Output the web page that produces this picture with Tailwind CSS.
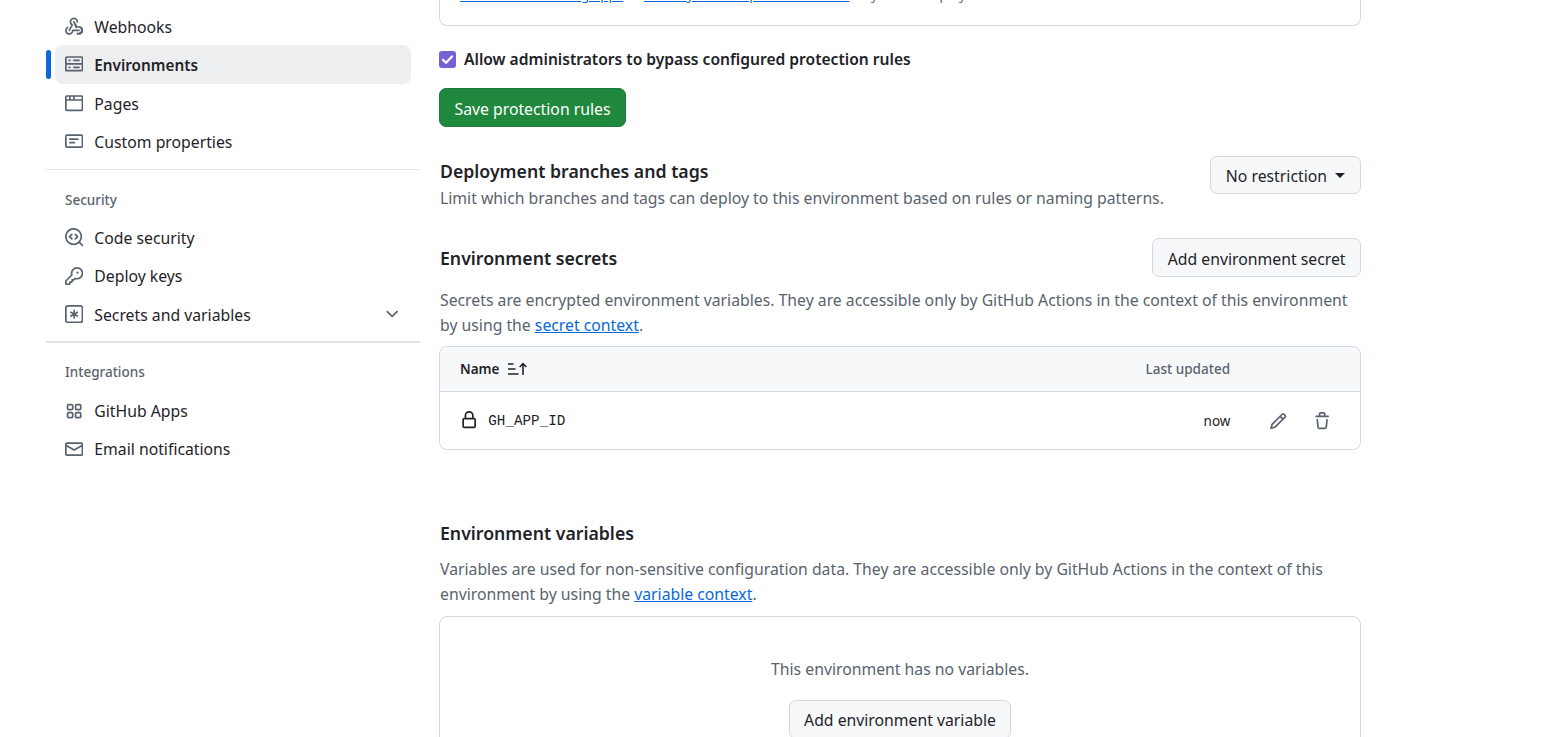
<!DOCTYPE html>
<html lang="en">
<head>
  <meta charset="UTF-8" />
  <meta name="viewport" content="width=device-width, initial-scale=1" />
  <title>Environment settings</title>
  <script src="https://cdn.jsdelivr.net/npm/@tailwindcss/browser@4"></script>
</head>
<body class="bg-white text-[#1f2328] font-['Noto_Sans',sans-serif] text-[15.78px] h-[737px] overflow-hidden">
  <div class="flex items-start">
    <!-- Sidebar -->
    <nav class="w-[374px] ml-[46px] shrink-0 pt-[6.8px]">
      <a class="flex items-center h-[38.4px] ml-[9px] mr-[9px] pl-[10px] gap-[11px] text-[#1f2328]">
        <svg class="w-[18.3px] h-[18.3px] fill-[#59636e] shrink-0" viewBox="0 0 16 16"><path d="M5.5 4.25a2.25 2.25 0 0 1 4.5 0 .75.75 0 0 0 1.5 0 3.75 3.75 0 1 0-6.14 2.889l-2.272 4.258a.75.75 0 0 0 1.324.706L7 7.25a.75.75 0 0 0-.309-1.015A2.25 2.25 0 0 1 5.5 4.25Z"/><path d="M7.364 3.607a.75.75 0 0 1 1.03.257l2.608 4.349a3.75 3.75 0 1 1-.628 6.785.75.75 0 0 1 .724-1.313 2.25 2.25 0 1 0-.752-3.96.75.75 0 0 1-1.1-.2L7.107 4.636a.75.75 0 0 1 .257-1.029Z"/><path d="M2.9 8.776A.75.75 0 0 1 2.625 9.8 2.25 2.25 0 1 0 6 11.75a.75.75 0 0 1 .75-.751h5.5a.75.75 0 0 1 0 1.5H7.425a3.751 3.751 0 1 1-5.55-3.998.75.75 0 0 1 1.024.274Z"/></svg>
        <span class="mt-[3px]">Webhooks</span>
      </a>
      <div class="relative">
        <span class="absolute left-0 top-[5px] w-[5px] h-[29px] rounded-full bg-[#0969da]"></span>
        <a class="flex items-center h-[38.4px] ml-[9px] mr-[9px] pl-[10px] gap-[11px] font-semibold text-[15.3px] bg-[#eceef0] rounded-[8px]">
          <svg class="w-[18.3px] h-[18.3px] fill-[#59636e] shrink-0" viewBox="0 0 16 16"><path d="M1.75 1h12.5c.966 0 1.75.784 1.75 1.75v4c0 .372-.116.717-.314 1 .198.283.314.628.314 1v4a1.75 1.75 0 0 1-1.75 1.75H1.75A1.75 1.75 0 0 1 0 13.75v-4c0-.372.116-.717.314-1A1.742 1.742 0 0 1 0 6.75v-4C0 1.784.784 1 1.75 1ZM1.5 2.75v4c0 .138.112.25.25.25h12.5a.25.25 0 0 0 .25-.25v-4a.25.25 0 0 0-.25-.25H1.75a.25.25 0 0 0-.25.25Zm.25 5.75a.25.25 0 0 0-.25.25v4c0 .138.112.25.25.25h12.5a.25.25 0 0 0 .25-.25v-4a.25.25 0 0 0-.25-.25ZM7 4.75A.75.75 0 0 1 7.75 4h4.5a.75.75 0 0 1 0 1.5h-4.5A.75.75 0 0 1 7 4.75ZM7.75 10h4.5a.75.75 0 0 1 0 1.5h-4.5a.75.75 0 0 1 0-1.5ZM3 4.75A.75.75 0 0 1 3.75 4h.5a.75.75 0 0 1 0 1.5h-.5A.75.75 0 0 1 3 4.75ZM3.75 10h.5a.75.75 0 0 1 0 1.5h-.5a.75.75 0 0 1 0-1.5Z"/></svg>
          <span class="mt-[2px]">Environments</span>
        </a>
      </div>
      <a class="flex items-center h-[38.4px] ml-[9px] mr-[9px] pl-[10px] gap-[11px]">
        <svg class="w-[18.3px] h-[18.3px] fill-[#59636e] shrink-0" viewBox="0 0 16 16"><path d="M0 2.75C0 1.784.784 1 1.75 1h12.5c.966 0 1.75.784 1.75 1.75v10.5A1.75 1.75 0 0 1 14.25 15H1.75A1.75 1.75 0 0 1 0 13.25ZM14.5 6h-13v7.25c0 .138.112.25.25.25h12.5a.25.25 0 0 0 .25-.25Zm-6-3.5v2h6V2.75a.25.25 0 0 0-.25-.25ZM5 2.5v2h2v-2Zm-3.25 0a.25.25 0 0 0-.25.25V4.5h2v-2Z"/></svg>
        <span class="mt-[4px]">Pages</span>
      </a>
      <a class="flex items-center h-[38.4px] ml-[9px] mr-[9px] pl-[10px] gap-[11px]">
        <svg class="w-[18.3px] h-[18.3px] fill-[#59636e] shrink-0" viewBox="0 0 16 16"><path d="M0 3.75C0 2.784.784 2 1.75 2h12.5c.966 0 1.75.784 1.75 1.75v8.5A1.75 1.75 0 0 1 14.25 14H1.75A1.75 1.75 0 0 1 0 12.25Zm1.75-.25a.25.25 0 0 0-.25.25v8.5c0 .138.112.25.25.25h12.5a.25.25 0 0 0 .25-.25v-8.5a.25.25 0 0 0-.25-.25ZM3.5 6.25a.75.75 0 0 1 .75-.75h7a.75.75 0 0 1 0 1.5h-7a.75.75 0 0 1-.75-.75Zm.75 2.25h4a.75.75 0 0 1 0 1.5h-4a.75.75 0 0 1 0-1.5Z"/></svg>
        <span class="mt-[3px]">Custom properties</span>
      </a>

      <div class="h-px bg-[#e3e6e9] mt-[9px]"></div>
      <h2 class="pl-[19px] mt-[20.5px] h-[19px] leading-[19px] text-[13.5px] font-medium text-[#59636e]">Security</h2>
      <div class="mt-[8.5px]">
        <a class="flex items-center h-[38.4px] ml-[9px] mr-[9px] pl-[10px] gap-[11px]">
          <svg class="w-[18.3px] h-[18.3px] fill-[#59636e] shrink-0" viewBox="0 0 16 16"><path d="M8.47 4.97a.75.75 0 0 0 0 1.06L9.94 7.5 8.47 8.97a.75.75 0 1 0 1.06 1.06l2-2a.75.75 0 0 0 0-1.06l-2-2a.75.75 0 0 0-1.06 0ZM6.53 6.03a.75.75 0 0 0-1.06-1.06l-2 2a.75.75 0 0 0 0 1.06l2 2a.75.75 0 1 0 1.06-1.06L5.06 7.5l1.47-1.47Z"/><path d="M12.246 13.307a7.501 7.501 0 1 1 1.06-1.06l2.474 2.473a.749.749 0 0 1-.326 1.275.749.749 0 0 1-.734-.215ZM1.5 7.5a6.002 6.002 0 0 0 3.608 5.504 6.002 6.002 0 0 0 6.486-1.117.748.748 0 0 1 .292-.293A6 6 0 1 0 1.5 7.5Z"/></svg>
          <span class="mt-[2px]">Code security</span>
        </a>
        <a class="flex items-center h-[38.4px] ml-[9px] mr-[9px] pl-[10px] gap-[11px]">
          <svg class="w-[18.3px] h-[18.3px] fill-[#59636e] shrink-0" viewBox="0 0 16 16"><path d="M10.5 0a5.499 5.499 0 1 1-1.288 10.848l-.932.932a.749.749 0 0 1-.53.22H7v.75a.749.749 0 0 1-.22.53l-.5.5a.749.749 0 0 1-.53.22H5v.75a.749.749 0 0 1-.22.53l-.5.5a.749.749 0 0 1-.53.22h-2A1.75 1.75 0 0 1 0 14.25v-2c0-.199.079-.389.22-.53l4.932-4.932A5.5 5.5 0 0 1 10.5 0Zm-4 5.5c-.001.431.069.86.205 1.269a.75.75 0 0 1-.181.768L1.5 12.56v1.69c0 .138.112.25.25.25h1.69l.06-.06v-1.19a.75.75 0 0 1 .75-.75h1.19l.06-.06v-1.19a.75.75 0 0 1 .75-.75h1.19l1.023-1.025a.75.75 0 0 1 .768-.18A4 4 0 1 0 6.5 5.5ZM11 6a1 1 0 1 1 0-2 1 1 0 0 1 0 2Z"/></svg>
          <span class="mt-[2px]">Deploy keys</span>
        </a>
        <a class="flex items-center h-[38.4px] ml-[9px] mr-[9px] pl-[10px] gap-[11px]">
          <svg class="w-[18.3px] h-[18.3px] fill-[#59636e] shrink-0" viewBox="0 0 16 16"><path d="M0 2.75A2.75 2.75 0 0 1 2.75 0h10.5A2.75 2.75 0 0 1 16 2.75v10.5A2.75 2.75 0 0 1 13.25 16H2.75A2.75 2.75 0 0 1 0 13.25ZM2.75 1.5c-.69 0-1.25.56-1.25 1.25v10.5c0 .69.56 1.25 1.25 1.25h10.5c.69 0 1.25-.56 1.25-1.25V2.75c0-.69-.56-1.25-1.25-1.25Z"/><path d="M8 4a.75.75 0 0 1 .75.75V6.7l1.69-.975a.75.75 0 0 1 .75 1.3L9.5 8l1.69.976a.75.75 0 0 1-.75 1.298L8.75 9.3v1.951a.75.75 0 0 1-1.5 0V9.299l-1.69.976a.75.75 0 0 1-.75-1.3L6.5 8l-1.69-.975a.75.75 0 0 1 .75-1.3l1.69.976V4.75A.75.75 0 0 1 8 4Z"/></svg>
          <span class="mt-[2px]">Secrets and variables</span>
          <svg class="w-[18.3px] h-[18.3px] fill-[#59636e] shrink-0 ml-auto mr-[10px]" viewBox="0 0 16 16"><path d="M12.78 5.22a.749.749 0 0 1 0 1.06l-4.25 4.25a.749.749 0 0 1-1.06 0L3.22 6.28a.749.749 0 1 1 1.06-1.06L8 8.939l3.72-3.719a.749.749 0 0 1 1.06 0Z"/></svg>
        </a>
      </div>

      <div class="h-[2px] bg-[#dfe3e7] mt-[7px]"></div>
      <h2 class="pl-[19px] mt-[20px] h-[19px] leading-[19px] text-[13.5px] font-medium text-[#59636e]">Integrations</h2>
      <div class="mt-[10px]">
        <a class="flex items-center h-[38.4px] ml-[9px] mr-[9px] pl-[10px] gap-[11px]">
          <svg class="w-[18.3px] h-[18.3px] fill-[#59636e] shrink-0" viewBox="0 0 16 16"><path d="M1.5 3.25c0-.966.784-1.75 1.75-1.75h2.5c.966 0 1.75.784 1.75 1.75v2.5A1.75 1.75 0 0 1 5.75 7.5h-2.5A1.75 1.75 0 0 1 1.5 5.75Zm7 0c0-.966.784-1.75 1.75-1.75h2.5c.966 0 1.75.784 1.75 1.75v2.5a1.75 1.75 0 0 1-1.75 1.75h-2.5A1.75 1.75 0 0 1 8.5 5.75Zm-7 7c0-.966.784-1.75 1.75-1.75h2.5c.966 0 1.75.784 1.75 1.75v2.5a1.75 1.75 0 0 1-1.75 1.75h-2.5a1.75 1.75 0 0 1-1.75-1.75Zm7 0c0-.966.784-1.75 1.75-1.75h2.5c.966 0 1.75.784 1.75 1.75v2.5a1.75 1.75 0 0 1-1.75 1.75h-2.5a1.75 1.75 0 0 1-1.75-1.75ZM3.25 3a.25.25 0 0 0-.25.25v2.5c0 .138.112.25.25.25h2.5A.25.25 0 0 0 6 5.75v-2.5A.25.25 0 0 0 5.75 3Zm7 0a.25.25 0 0 0-.25.25v2.5c0 .138.112.25.25.25h2.5a.25.25 0 0 0 .25-.25v-2.5a.25.25 0 0 0-.25-.25Zm-7 7a.25.25 0 0 0-.25.25v2.5c0 .138.112.25.25.25h2.5a.25.25 0 0 0 .25-.25v-2.5a.25.25 0 0 0-.25-.25Zm7 0a.25.25 0 0 0-.25.25v2.5c0 .138.112.25.25.25h2.5a.25.25 0 0 0 .25-.25v-2.5a.25.25 0 0 0-.25-.25Z"/></svg>
          <span class="mt-[2px]">GitHub Apps</span>
        </a>
        <a class="flex items-center h-[38.4px] ml-[9px] mr-[9px] pl-[10px] gap-[11px]">
          <svg class="w-[18.3px] h-[18.3px] fill-[#59636e] shrink-0" viewBox="0 0 16 16"><path d="M1.75 2h12.5c.966 0 1.75.784 1.75 1.75v8.5A1.75 1.75 0 0 1 14.25 14H1.75A1.75 1.75 0 0 1 0 12.25v-8.5C0 2.784.784 2 1.75 2ZM1.5 12.251c0 .138.112.25.25.25h12.5a.25.25 0 0 0 .25-.25V5.809L8.38 9.397a.75.75 0 0 1-.76 0L1.5 5.809v6.442Zm13-8.181v-.32a.25.25 0 0 0-.25-.25H1.75a.25.25 0 0 0-.25.25v.32L8 7.88Z"/></svg>
          <span class="mt-[2px]">Email notifications</span>
        </a>
      </div>
    </nav>

    <!-- Main column, scrolled part way down the page -->
    <main class="w-[922px] ml-[19px] shrink-0">
      <div class="h-[26px] overflow-hidden border border-t-0 border-[#d1d9e0] rounded-b-[8px] pl-[20px] text-[#59636e] text-[13.45px] leading-[20px] relative">
        <p class="absolute top-[-15px] left-[20px] whitespace-nowrap"><a class="text-[#0969da] underline">Learn about existing apps</a> or <a class="text-[#0969da] underline">create your own protection rules</a> so you can deploy with confidence.</p>
      </div>

      <label class="flex items-center gap-[8px] mt-[23px] h-[20px] font-semibold text-[15.6px]">
        <span class="w-[17px] h-[17px] rounded-[3px] bg-[#7760d6] flex items-center justify-center shrink-0">
          <svg class="w-[13px] h-[13px] fill-none stroke-white stroke-[2.8px]" viewBox="0 0 16 16"><path d="M2.5 8.5 6.2 12 13.5 4.2" stroke-linecap="round" stroke-linejoin="round"/></svg>
        </span>
        <span class="mt-[2px]">Allow administrators to bypass configured protection rules</span>
      </label>
      <button class="block mt-[19px] h-[39px] w-[187px] pt-[4px] whitespace-nowrap bg-[#1f883d] text-white rounded-[7px] border border-[#1b7c37]">Save protection rules</button>

      <section class="flex justify-between items-start mt-[29px]">
        <div class="pl-[1px]">
          <h3 class="text-[17.7px] font-semibold leading-[27px] mt-[2px]">Deployment branches and tags</h3>
          <p class="text-[#59636e] leading-[25px] mt-[1px]">Limit which branches and tags can deploy to this environment based on rules or naming patterns.</p>
        </div>
        <button class="flex items-center gap-[8px] h-[38px] px-[15px] pt-[3px] bg-[#f6f8fa] border border-[#d1d9e0] rounded-[7px]">
          No restriction
          <span class="w-0 h-0 border-x-[5px] border-x-transparent border-t-[5px] border-t-[#1f2328] -mt-[3px]"></span>
        </button>
      </section>

      <section class="mt-[27px]">
        <div class="flex justify-between items-center">
          <h3 class="text-[17.7px] font-semibold pl-[1px] pt-[2px]">Environment secrets</h3>
          <button class="h-[39px] px-[14.5px] pt-[4px] bg-[#f6f8fa] border border-[#d1d9e0] rounded-[7px]">Add environment secret</button>
        </div>
        <p class="text-[#59636e] leading-[25px] mt-[11px] pl-[1px]">Secrets are encrypted environment variables. They are accessible only by GitHub Actions in the context of this environment<br />by using the <a class="text-[#0969da] underline">secret context</a>.</p>
        <div class="mt-[8px] border border-[#d1d9e0] rounded-[8px] overflow-hidden">
          <div class="flex items-center h-[45px] bg-[#f6f8fa] border-b border-[#d1d9e0] pl-[20px] pr-[130px] text-[13.5px]">
            <span class="font-semibold">Name</span>
            <svg class="w-[21px] h-[16px] ml-[9px] fill-[#1f2328]" viewBox="0 0 21 16"><path d="M0 2.2h5.5v1.6H0ZM0 7.2h7.5v1.6H0ZM0 12.2h10.5v1.6H0Z"/><path d="M15.8 14h-1.6V4.6l-2 2-1.1-1.1L15 1.6l3.9 3.9-1.1 1.1-2-2Z"/></svg>
            <span class="ml-auto font-medium text-[#59636e] text-[13.5px]">Last updated</span>
          </div>
          <div class="flex items-center h-[57px] pl-[20px] pr-[29px]">
            <svg class="w-[18.3px] h-[18.3px] fill-[#1f2328] shrink-0" viewBox="0 0 16 16"><path d="M4 4a4 4 0 0 1 8 0v2h.25c.966 0 1.75.784 1.75 1.75v5.5A1.75 1.75 0 0 1 12.25 15h-8.5A1.75 1.75 0 0 1 2 13.25v-5.5C2 6.784 2.784 6 3.75 6H4Zm8.25 3.5h-8.5a.25.25 0 0 0-.25.25v5.5c0 .138.112.25.25.25h8.5a.25.25 0 0 0 .25-.25v-5.5a.25.25 0 0 0-.25-.25ZM10.5 6V4a2.5 2.5 0 1 0-5 0v2Z"/></svg>
            <span class="ml-[10px] font-['Liberation_Mono',monospace] text-[14.27px] mt-[2px]">GH_APP_ID</span>
            <span class="ml-auto text-[13.5px] mt-[2px]">now</span>
            <svg class="w-[18.3px] h-[18.3px] ml-[39px] mt-[1px] fill-[#59636e]" viewBox="0 0 16 16"><path d="M11.013 1.427a1.75 1.75 0 0 1 2.474 0l1.086 1.086a1.75 1.75 0 0 1 0 2.474l-8.61 8.61c-.21.21-.47.364-.756.445l-3.251.93a.75.75 0 0 1-.927-.928l.929-3.25c.081-.286.235-.547.445-.758l8.61-8.61Zm.176 4.823L9.75 4.81l-6.286 6.287a.253.253 0 0 0-.064.108l-.558 1.953 1.953-.558a.253.253 0 0 0 .108-.064Zm1.238-3.763a.25.25 0 0 0-.354 0L10.811 3.75l1.439 1.44 1.263-1.263a.25.25 0 0 0 0-.354Z"/></svg>
            <svg class="w-[18.3px] h-[18.3px] ml-[25px] mt-[1px] fill-[#59636e]" viewBox="0 0 16 16"><path d="M11 1.75V3h2.25a.75.75 0 0 1 0 1.5H2.75a.75.75 0 0 1 0-1.5H5V1.75C5 .784 5.784 0 6.75 0h2.5C10.216 0 11 .784 11 1.75ZM4.496 6.675l.66 6.6a.25.25 0 0 0 .249.225h5.19a.25.25 0 0 0 .249-.225l.66-6.6a.75.75 0 0 1 1.492.149l-.66 6.6A1.748 1.748 0 0 1 10.595 15h-5.19a1.75 1.75 0 0 1-1.741-1.575l-.66-6.6a.75.75 0 1 1 1.492-.15ZM6.5 1.75V3h3V1.75a.25.25 0 0 0-.25-.25h-2.5a.25.25 0 0 0-.25.25Z"/></svg>
          </div>
        </div>
      </section>

      <section class="mt-[69px]">
        <h3 class="text-[17.7px] font-semibold leading-[27px] pl-[1px] pt-[1px] -mb-[1px]">Environment variables</h3>
        <p class="text-[#59636e] leading-[25px] mt-[11px] pl-[1px]">Variables are used for non-sensitive configuration data. They are accessible only by GitHub Actions in the context of this<br />environment by using the <a class="text-[#0969da] underline">variable context</a>.</p>
        <div class="mt-[9px] border border-[#d1d9e0] rounded-[8px] h-[160px] flex flex-col items-center pt-[40px]">
          <p class="text-[#59636e] leading-[25px]">This environment has no variables.</p>
          <button class="mt-[18px] h-[39px] px-[14.5px] pt-[2px] bg-[#f6f8fa] border border-[#d1d9e0] rounded-[7px]">Add environment variable</button>
        </div>
      </section>
    </main>
  </div>
</body>
</html>
